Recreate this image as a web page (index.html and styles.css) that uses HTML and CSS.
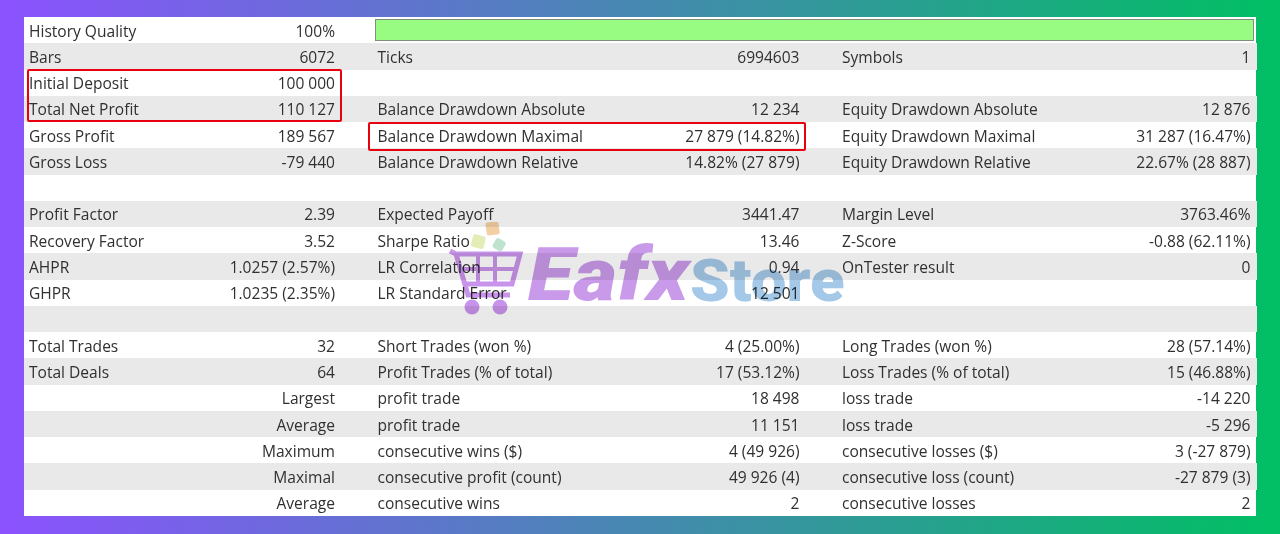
FILE: index.html
```html
<!DOCTYPE html>
<html lang="en">
<head>
<meta charset="utf-8">
<title>Tester report</title>
<link rel="stylesheet" href="styles.css">
</head>
<body>
<main class="card">
  <div class="row"><div class="cell"><span>History Quality</span><span>100%</span></div><div class="bar"></div></div>
  <div class="row"><div class="cell"><span>Bars</span><span>6072</span></div><div class="cell"><span>Ticks</span><span>6994603</span></div><div class="cell"><span>Symbols</span><span>1</span></div></div>
  <div class="row"><div class="cell"><span>Initial Deposit</span><span>100 000</span></div></div>
  <div class="row"><div class="cell"><span>Total Net Profit</span><span>110 127</span></div><div class="cell"><span>Balance Drawdown Absolute</span><span>12 234</span></div><div class="cell"><span>Equity Drawdown Absolute</span><span>12 876</span></div></div>
  <div class="row"><div class="cell"><span>Gross Profit</span><span>189 567</span></div><div class="cell"><span>Balance Drawdown Maximal</span><span>27 879 (14.82%)</span></div><div class="cell"><span>Equity Drawdown Maximal</span><span>31 287 (16.47%)</span></div></div>
  <div class="row"><div class="cell"><span>Gross Loss</span><span>-79 440</span></div><div class="cell"><span>Balance Drawdown Relative</span><span>14.82% (27 879)</span></div><div class="cell"><span>Equity Drawdown Relative</span><span>22.67% (28 887)</span></div></div>
  <div class="row"></div>
  <div class="row"><div class="cell"><span>Profit Factor</span><span>2.39</span></div><div class="cell"><span>Expected Payoff</span><span>3441.47</span></div><div class="cell"><span>Margin Level</span><span>3763.46%</span></div></div>
  <div class="row"><div class="cell"><span>Recovery Factor</span><span>3.52</span></div><div class="cell"><span>Sharpe Ratio</span><span>13.46</span></div><div class="cell"><span>Z-Score</span><span>-0.88 (62.11%)</span></div></div>
  <div class="row"><div class="cell"><span>AHPR</span><span>1.0257 (2.57%)</span></div><div class="cell"><span>LR Correlation</span><span>0.94</span></div><div class="cell"><span>OnTester result</span><span>0</span></div></div>
  <div class="row"><div class="cell"><span>GHPR</span><span>1.0235 (2.35%)</span></div><div class="cell"><span>LR Standard Error</span><span>12 501</span></div></div>
  <div class="row"></div>
  <div class="row"><div class="cell"><span>Total Trades</span><span>32</span></div><div class="cell"><span>Short Trades (won %)</span><span>4 (25.00%)</span></div><div class="cell"><span>Long Trades (won %)</span><span>28 (57.14%)</span></div></div>
  <div class="row"><div class="cell"><span>Total Deals</span><span>64</span></div><div class="cell"><span>Profit Trades (% of total)</span><span>17 (53.12%)</span></div><div class="cell"><span>Loss Trades (% of total)</span><span>15 (46.88%)</span></div></div>
  <div class="row"><div class="cell end"><span>Largest</span></div><div class="cell"><span>profit trade</span><span>18 498</span></div><div class="cell"><span>loss trade</span><span>-14 220</span></div></div>
  <div class="row"><div class="cell end"><span>Average</span></div><div class="cell"><span>profit trade</span><span>11 151</span></div><div class="cell"><span>loss trade</span><span>-5 296</span></div></div>
  <div class="row"><div class="cell end"><span>Maximum</span></div><div class="cell"><span>consecutive wins ($)</span><span>4 (49 926)</span></div><div class="cell"><span>consecutive losses ($)</span><span>3 (-27 879)</span></div></div>
  <div class="row"><div class="cell end"><span>Maximal</span></div><div class="cell"><span>consecutive profit (count)</span><span>49 926 (4)</span></div><div class="cell"><span>consecutive loss (count)</span><span>-27 879 (3)</span></div></div>
  <div class="row"><div class="cell end"><span>Average</span></div><div class="cell"><span>consecutive wins</span><span>2</span></div><div class="cell"><span>consecutive losses</span><span>2</span></div></div>

  <div class="mark mark-left"></div>
  <div class="mark mark-mid"></div>

  <div class="logo">
    <svg class="cart" viewBox="0 0 76 94" width="76" height="94" aria-hidden="true">
      <rect class="sq-a" x="38" y="0" width="13" height="13" rx="2" transform="rotate(-8 44 6)"/>
      <rect class="sq-b" x="24" y="13" width="13" height="13" rx="2" transform="rotate(14 30 19)"/>
      <rect class="sq-c" x="46" y="17" width="11" height="11" rx="3" transform="rotate(30 51 22)"/>
      <path class="cart-line" d="M2 29 L8 32 H72 L64 62 H15 M8 32 L20 73 H62"/>
      <path class="cart-line thin" d="M30 32 V62 M47 32 V62 M11 47 H68"/>
      <circle class="cart-fill" cx="24" cy="85" r="7.5"/>
      <circle class="cart-fill" cx="52" cy="85" r="7.5"/>
    </svg>
    <span class="eafx">Eafx</span><span class="store">Store</span>
  </div>
</main>
</body>
</html>
```
FILE: styles.css
```css
html, body {
  margin: 0;
  height: 534px;
  overflow: hidden;
}
body {
  background: linear-gradient(90deg, #8c52ff 0%, #00bf63 100%);
  padding-top: 17px;
  box-sizing: border-box;
  font-family: "Open Sans", "Noto Sans", sans-serif;
  font-size: 15.55px;
  color: #303030;
}
.card {
  position: relative;
  margin-left: 24px;
  width: 1232px;
  height: 499px;
  background: #fff;
  display: grid;
  grid-template-rows: repeat(19, 1fr);
  filter: blur(.3px);
}
.row {
  display: grid;
  grid-template-columns: 306px 422px 408.5px;
  column-gap: 42.5px;
  padding: 1px 6px 0 5px;
  align-items: center;
}
.row:nth-child(even) {
  background: #e9e9e9;
}
.cell {
  display: flex;
  justify-content: space-between;
  white-space: nowrap;
  line-height: 20px;
}
.cell.end {
  justify-content: flex-end;
}
.bar {
  grid-column: 2 / 4;
  margin: -1px -1px 0 -3px;
  width: 879px;
  height: 22px;
  box-sizing: border-box;
  background: #98fb82;
  border: 1px solid #7f8f7a;
}
.mark {
  position: absolute;
  border: 2px solid #e8000f;
  border-radius: 2px;
  box-sizing: border-box;
}
.mark-left {
  left: 3px;
  top: 52px;
  width: 315px;
  height: 53px;
}
.mark-mid {
  left: 344px;
  top: 105px;
  width: 438px;
  height: 29px;
}
.logo {
  position: absolute;
  left: 424px;
  top: 205px;
  height: 94px;
  display: flex;
  align-items: flex-end;
  white-space: nowrap;
  font-family: "Roboto", "Liberation Sans", sans-serif;
  font-weight: 900;
  pointer-events: none;
  mix-blend-mode: multiply;
}
.cart {
  margin-right: 4px;
}
.sq-a { fill: #f5cfa4; }
.sq-b { fill: #e2edb8; }
.sq-c { fill: #bfe3cf; }
.cart-line {
  fill: none;
  stroke: #c893ea;
  stroke-width: 5;
}
.cart-line.thin { stroke-width: 4; }
.cart-fill { fill: #c893ea; }
.eafx {
  font-size: 74px;
  line-height: 84px;
  font-style: italic;
  color: #c999ea;
  margin-bottom: -1px;
  margin-right: 21px;
  transform: scaleX(1.14);
  transform-origin: left;
}
.store {
  font-size: 60px;
  line-height: 74px;
  color: #a3c8e8;
  margin-bottom: -2px;
  transform: scaleX(1.06);
  transform-origin: left;
}
```
